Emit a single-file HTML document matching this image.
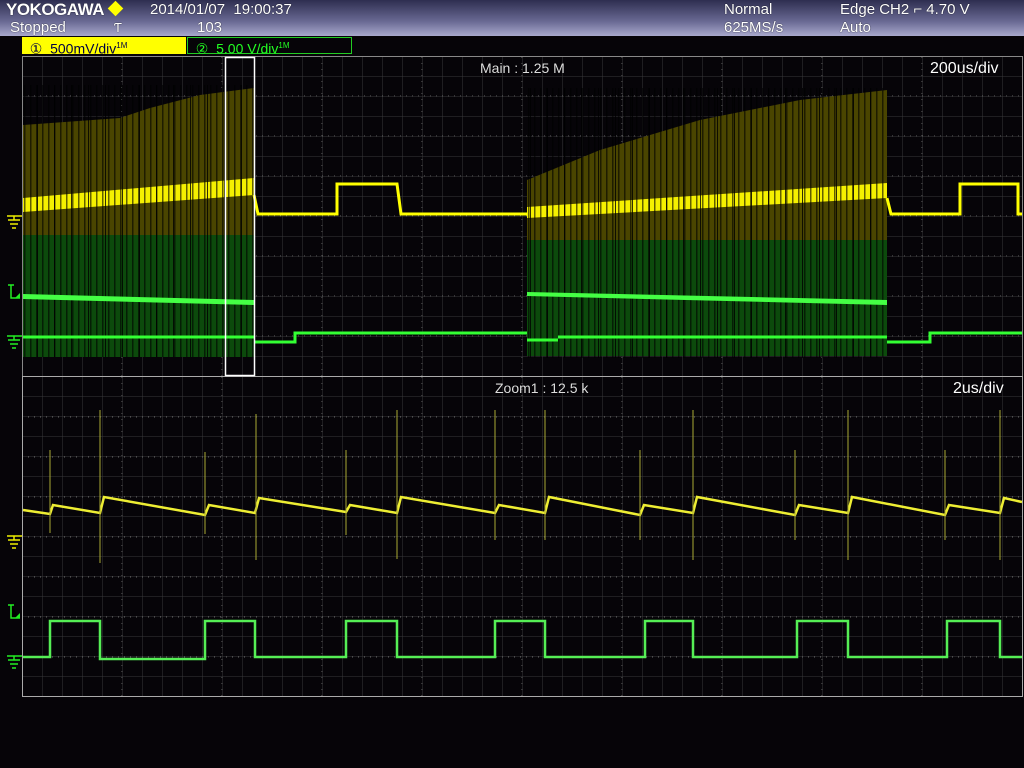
<!DOCTYPE html>
<html><head><meta charset="utf-8"><style>
*{margin:0;padding:0}
body{width:1024px;height:768px;background:#060408;overflow:hidden;position:relative;font-family:"Liberation Sans",sans-serif}
#hdr{position:absolute;left:0;top:0;width:1024px;height:36px;background:linear-gradient(#2e2e50,#6a6a94 60%,#a8a8cc)}
.t{position:absolute;color:#fff;font-size:15px;line-height:16px;white-space:nowrap;text-shadow:0 0 1px #000}
</style></head><body>
<div id="hdr"></div>
<div class="t" style="left:6px;top:2px;font-size:17px;font-weight:bold;letter-spacing:-0.5px">YOKOGAWA</div>
<div style="position:absolute;left:110px;top:3px;width:11px;height:11px;background:#ff0;transform:rotate(45deg)"></div>
<div class="t" style="left:150px;top:2px">2014/01/07&nbsp; 19:00:37</div>
<div class="t" style="left:10px;top:20px">Stopped</div>
<div class="t" style="left:114px;top:20px;font-size:13px">Ƭ</div>
<div class="t" style="left:197px;top:20px">103</div>
<div class="t" style="left:724px;top:2px">Normal</div>
<div class="t" style="left:724px;top:20px">625MS/s</div>
<div class="t" style="left:840px;top:2px">Edge CH2 ⌐ 4.70 V</div>
<div class="t" style="left:840px;top:20px">Auto</div>
<div style="position:absolute;left:22px;top:37px;width:164px;height:17px;background:#ff0;color:#004;font-size:14px;line-height:17px;white-space:nowrap">&nbsp;&nbsp;①&nbsp;&nbsp;500mV/div<sup style="font-size:8px">1M</sup></div>
<div style="position:absolute;left:187px;top:37px;width:163px;height:15px;border:1px solid #2c2;color:#2f2;font-size:14px;line-height:15px;white-space:nowrap">&nbsp;&nbsp;②&nbsp;&nbsp;5.00 V/div<sup style="font-size:8px">1M</sup></div>
<svg width="1024" height="768" style="position:absolute;left:0;top:0">
<defs>
<pattern id="g" x="22" y="56" width="20" height="20" patternUnits="userSpaceOnUse"><path d="M0 0H20M0 0V20" stroke="#38383a" stroke-width="1"/></pattern>
<pattern id="st" x="0" y="0" width="6" height="10" patternUnits="userSpaceOnUse"><rect x="0" width="1.5" height="10" fill="#000" opacity=".6"/></pattern>
<pattern id="st2" x="0" y="0" width="17" height="10" patternUnits="userSpaceOnUse"><rect x="3" width="1" height="10" fill="#000" opacity=".8"/></pattern>
</defs>
<rect x="22" y="56" width="1001" height="641" fill="url(#g)"/>
<g stroke="#666" stroke-dasharray="1 5">
<path d="M122 57V376M222 57V376M322 57V376M422 57V376M522 57V376M622 57V376M722 57V376M822 57V376M922 57V376M122 377V696M222 377V696M322 377V696M422 377V696M522 377V696M622 377V696M722 377V696M822 377V696M922 377V696"/>
<path d="M22 96H1022M22 136H1022M22 176H1022M22 216H1022M22 256H1022M22 296H1022M22 336H1022M22 417H1022M22 457H1022M22 497H1022M22 537H1022M22 577H1022M22 617H1022M22 657H1022"/>
</g>
<rect x="22.5" y="56.5" width="1000" height="320" fill="none" stroke="#888"/>
<rect x="22.5" y="376.5" width="1000" height="320" fill="none" stroke="#aaa"/>
<!-- burst 1 -->
<polygon points="23,235 23,125 120,118 150,108 200,95 254,88 254,245 150,240" fill="#4a4500"/>
<rect x="23" y="235" width="231" height="122" fill="#0c4a0c"/>
<polygon points="23,198 254,178 254,195 23,212" fill="#f5f000"/>
<rect x="23" y="85" width="231" height="272" fill="url(#st)"/>
<rect x="23" y="85" width="231" height="272" fill="url(#st2)"/>
<polygon points="23,294 254,300 254,305 23,299" fill="#4f4"/>
<!-- burst 2 -->
<polygon points="527,240 527,180 600,150 700,120 800,100 887,90 887,245" fill="#4a4500"/>
<rect x="527" y="240" width="360" height="116" fill="#0c4a0c"/>
<polygon points="527,207 887,183 887,198 527,218" fill="#f5f000"/>
<rect x="527" y="88" width="360" height="270" fill="url(#st)"/>
<rect x="527" y="88" width="360" height="270" fill="url(#st2)"/>
<polygon points="527,292 887,300 887,305 527,296" fill="#4f4"/>
<!-- flat traces -->
<path d="M254 195L258 214H337V184H397L401 214H527M887 198L891 214H960V184H1018V214H1022" fill="none" stroke="#ff0" stroke-width="3"/>
<path d="M23 337H254M254 342H295V333H527M527 340H558M558 337H887M887 342H930V333H1022" fill="none" stroke="#3f3" stroke-width="3"/>
<rect x="225.5" y="57.5" width="29" height="318" fill="none" stroke="#fff" stroke-width="1.5"/>
<!-- zoom traces -->
<g fill="none" stroke="#ee3" stroke-width="2.5">
<path d="M23 510L50 514L53 505L100 513L104 497L205 515L209 505L255 513L259 498L346 512L350 505L397 513L401 497L495 513L499 505L545 513L549 497L640 515L644 505L693 513L697 497L795 515L799 505L848 513L852 497L945 515L949 505L1000 513L1004 498L1022 502"/>
</g>
<g stroke="#aa3" stroke-width="1">
<path d="M50 450V533M100 410V563M205 452V534M256 414V560M346 450V535M397 410V559M495 410V540M545 410V540M640 450V540M693 410V560M795 450V540M848 410V560M945 450V540M1000 410V560"/>
</g>
<path d="M23 657H50V621H100V659H205V621H255V657H346V621H397V657H495V621H545V657H645V621H693V657H797V621H848V657H947V621H1000V657H1022" fill="none" stroke="#5e5" stroke-width="2.5"/>
<!-- markers -->
<g stroke="#ee0" stroke-width="1.5"><path d="M7 216H22M14 216V220M8 220H20M10 224H18M12 228H16M7 536H22M14 536V540M8 540H20M10 544H18M12 548H16"/></g>
<g stroke="#2e2" stroke-width="1.5"><path d="M7 336H22M14 336V340M8 340H20M10 344H18M12 348H16M7 656H22M14 656V660M8 660H20M10 664H18M12 668H16"/>
<path d="M8 285H14M11 285V298H20M8 605H14M11 605V618H20"/></g>
<polygon points="15,298 20,293 20,298" fill="#2e2"/><polygon points="15,618 20,613 20,618" fill="#2e2"/>
</svg>
<div class="t" style="left:480px;top:60px;color:#ddd;font-size:14px">Main : 1.25 M</div>
<div class="t" style="left:930px;top:61px;font-size:16px">200us/div</div>
<div class="t" style="left:495px;top:380px;color:#ddd;font-size:14px">Zoom1 : 12.5 k</div>
<div class="t" style="left:953px;top:381px;font-size:16px">2us/div</div>
</body></html>
